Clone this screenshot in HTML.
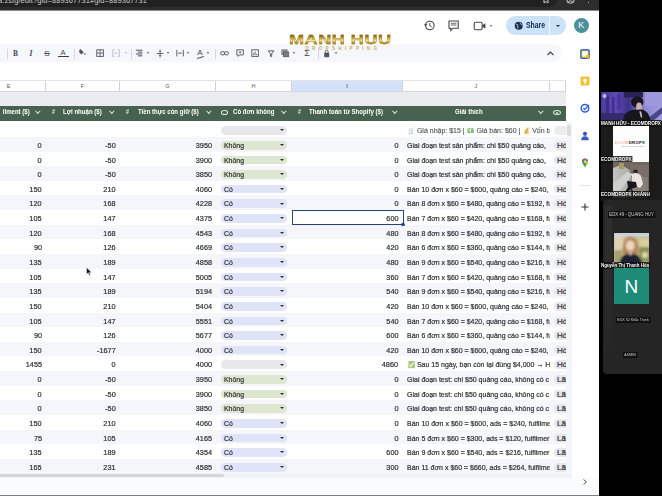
<!DOCTYPE html>
<html lang="vi">
<head>
<meta charset="utf-8">
<title>Sheet</title>
<style>
html,body{margin:0;padding:0;}
body{width:662px;height:496px;overflow:hidden;background:#fff;font-family:"Liberation Sans",sans-serif;}
#root{position:relative;width:662px;height:496px;overflow:hidden;background:#fff;}
#root *{box-sizing:border-box;}
.abs{position:absolute;}
/* browser bar */
#chrome{left:0;top:0;width:662px;height:10.8px;background:#2d2d2d;border-bottom:.9px solid #8a8a8a;}
#url{left:-2px;top:-4.2px;font-size:7.45px;color:#c9c9c9;white-space:nowrap;letter-spacing:.1px;}
/* right panel */
#panel{left:599px;top:0;width:63px;height:496px;background:#000;overflow:hidden;}
/* sheet */
#sheet{left:0;top:10px;width:599px;height:486px;background:#fff;overflow:hidden;}
#toolbar{left:-20px;top:33.5px;width:582px;height:18.5px;border-radius:9.5px;background:#f5f7fb;}
#colhdr{left:0;top:70px;width:566px;height:12px;background:#fff;border-top:1px solid #e1e3e6;border-bottom:1px solid #d5d7da;}
#colhdr span{position:absolute;top:0;height:10px;font-size:5.5px;color:#555;text-align:center;line-height:10px;border-right:1px solid #d0d2d5;}
#frozen{left:0;top:82px;width:566px;height:14.3px;background:#ebecef;}
#ghead{left:0;top:96.3px;width:566px;height:14.8px;background:#47634f;}
#ghead span{position:absolute;top:-.8px;line-height:12.6px;font-size:7.6px;transform:scaleX(.8);transform-origin:0 50%;font-weight:bold;color:#fff;white-space:nowrap;}
#ghead .hs{font-weight:bold;font-size:6.4px;font-style:italic;color:#e4ebe6;}
#ghead .ar{width:3.6px;height:3.6px;border-right:1px solid #dfe7e1;border-bottom:1px solid #dfe7e1;transform:rotate(45deg);transform-origin:50% 50%;top:3.2px;}
/* rows */
#rows{left:0;top:0;width:566px;height:496px;}
.row{position:absolute;left:0;width:566px;height:14.7px;background:#fff;overflow:hidden;}
.row.odd{background:#f5f6fa;}
.row span{position:absolute;top:0;line-height:17.4px;font-size:8.1px;color:#2e3033;-webkit-text-stroke:.22px #2e3033;white-space:nowrap;}
.row .n{text-align:right;transform:scaleX(.9);transform-origin:100% 50%;}
.row .j{left:406.5px;width:165.3px;overflow:hidden;transform:scaleX(.865);transform-origin:0 50%;}
.row .chip{left:221px;top:4px;width:66px;height:8.6px;border-radius:4.3px;}
.row .chip b{position:absolute;left:3.2px;top:0;font-weight:normal;line-height:9.2px;font-size:8px;transform:scaleX(.865);transform-origin:0 50%;color:#33363a;}
.row .chip i{position:absolute;right:3.4px;top:3.1px;width:0;height:0;border-left:2.3px solid transparent;border-right:2.3px solid transparent;border-top:2.7px solid #2b2b2b;}
.cg{background:#e7e8ec;}
.ck{background:#dde6d0;}
.cc{background:#e0e4f9;}
.row .kchip{left:554px;top:4px;width:20px;height:8.6px;border-radius:4.3px;background:#e6e7ec;line-height:9.2px;font-size:8px;padding-left:3px;color:#33363a;}
.row .kchip.kg{background:#ececef;}

/* top area */
.ic{position:absolute;}
#logo{z-index:5;left:289px;top:23px;width:102px;height:15px;overflow:visible;}
#logo b{position:absolute;left:0;top:0;display:block;white-space:nowrap;font-size:12.3px;line-height:15px;font-weight:bold;transform-origin:0 50%;transform:scaleX(1.47);letter-spacing:.35px;background:linear-gradient(180deg,#7d5d13 18%,#c9a545 34%,#f3e6a6 50%,#b38a28 66%,#8a6716 84%);-webkit-background-clip:text;background-clip:text;color:transparent;-webkit-text-stroke:.45px rgba(176,140,44,.85);}
#logo2{z-index:5;left:305.5px;top:35.6px;font-size:4.6px;line-height:6px;letter-spacing:3.3px;color:#c4b070;white-space:nowrap;font-weight:bold;}
#share{left:505.5px;top:6.4px;width:60px;height:18.8px;border-radius:9.4px;background:#cbe2f8;}
#share b{position:absolute;left:20.5px;top:0;line-height:18.8px;font-size:9px;color:#0b2a4a;transform:scaleX(.76);transform-origin:0 50%;}
#share u{position:absolute;left:43.5px;top:0;width:1px;height:18.8px;background:#f2f7fc;}
#share i{position:absolute;left:50px;top:8.4px;border-left:2.2px solid transparent;border-right:2.2px solid transparent;border-top:2.6px solid #17304d;}
#avatar{left:573.8px;top:8.1px;width:15px;height:15px;border-radius:50%;background:#4d8f9b;color:#fff;font-size:9px;line-height:15px;text-align:center;}
.tsep{position:absolute;top:38.5px;width:1px;height:10px;background:#d4d8de;}
.tarr{position:absolute;top:42.2px;border-left:1.7px solid transparent;border-right:1.7px solid transparent;border-top:2px solid #505357;}
.tt{position:absolute;top:36.5px;font-size:7.4px;line-height:13px;color:#45484c;text-align:center;width:12px;}
/* side icons */
.sico{position:absolute;left:580px;width:10px;height:10px;}
/* panel */
.tile{position:absolute;overflow:hidden;}
.lbl{position:absolute;white-space:nowrap;background:rgba(16,16,16,.82);padding-right:1px;color:#fff;font-weight:bold;font-size:5.5px;line-height:7px;text-shadow:0 0 1px #000;transform:scaleX(.85);transform-origin:0 50%;}
.lbl2{position:absolute;white-space:nowrap;color:#cfcfcf;font-size:5px;line-height:6.5px;background:#111;padding:0 1.5px;transform:scaleX(.86);transform-origin:0 50%;}
.row .j em{font-style:normal;font-size:6.6px;opacity:.75;-webkit-text-stroke:0;padding:0 .6px;}
.row .j.r0{color:#4a4d52;-webkit-text-stroke:.12px #4a4d52;}
</style>
</head>
<body>
<div id="root">

<!-- ============ SHEET ============ -->
<div id="sheet" class="abs">

  <!-- title row icons -->
  <svg class="ic" style="left:423px;top:9px" width="13" height="13" viewBox="0 0 13 13"><circle cx="6.8" cy="6.5" r="4.3" fill="none" stroke="#444" stroke-width="1.1"/><path d="M6.8 4v2.7l1.8 1.1" fill="none" stroke="#444" stroke-width="1"/><path d="M.8 5.2l1.9 2 1.8-2z" fill="#444"/></svg>
  <svg class="ic" style="left:447px;top:9px" width="13" height="13" viewBox="0 0 13 13"><path d="M2 2h9.2v7.2H6l-2.2 2.2V9.200H2z" fill="none" stroke="#444" stroke-width="1.1"/><path d="M3.8 4.300h5.600M3.800 6h5.600" stroke="#444" stroke-width=".8"/></svg>
  <svg class="ic" style="left:473px;top:10px" width="14" height="12" viewBox="0 0 14 12"><rect x="1.200" y="2.200" width="8" height="7.600" rx="1.500" fill="none" stroke="#444" stroke-width="1.100"/><path d="M9.400 5.200l3-2v5.600l-3-2z" fill="#444"/></svg>
  <i class="tarr" style="left:490px;top:15px"></i>
  <div id="share" class="abs"><svg class="ic" style="left:8px;top:4.800px" width="9.500" height="9.500" viewBox="0 0 10 10"><circle cx="5" cy="5" r="4.200" fill="#17304d"/><path d="M2 3.500c1.500-.5 2.500.5 2 1.500s.5 1.500 0 3M6 1.500c0 1 1.500 1 1.500 2s1 .500 1.500 1" fill="none" stroke="#cbe2f8" stroke-width=".9"/></svg><b>Share</b><u></u><i></i></div>
  <div id="avatar" class="abs">K</div>
  <div id="logo" class="abs"><b>MANH HUU</b></div>
  <div id="logo2" class="abs">DROPSHIPPING</div>
  <!-- toolbar -->
  <div id="toolbar" class="abs"></div>
  <i class="tsep" style="left:6.500px"></i>
  <span class="tt" style="left:9.500px;font-family:'Liberation Serif',serif;font-weight:bold">B</span>
  <span class="tt" style="left:25px;font-family:'Liberation Serif',serif;font-style:italic;font-weight:bold">I</span>
  <span class="tt" style="left:41px;text-decoration:line-through;font-size:8px">S</span>
  <span class="tt" style="left:57px;font-size:7.500px;top:35.500px">A</span><i class="abs" style="left:57.500px;top:45.500px;width:11px;height:1.800px;background:#3a3c40"></i>
  <i class="tsep" style="left:73.500px"></i>
  <svg class="ic" style="left:77.90px;top:37.90px" width="8.20" height="8.20" viewBox="0 0 10 10"><path d="M2.500 1l4.500 4.200-2.800 2.600-3-3z" fill="#505357"/><circle cx="8.300" cy="7.300" r="1" fill="#505357"/></svg>
  <svg class="ic" style="left:95.90px;top:39.40px" width="8.20" height="8.20" viewBox="0 0 10 10"><rect x="1" y="1" width="8" height="8" fill="none" stroke="#505357" stroke-width="1.100"/><path d="M5 1v8M1 5h8" stroke="#505357" stroke-width="1"/></svg>
  <svg class="ic" style="left:111.90px;top:39.40px" width="8.20" height="8.20" viewBox="0 0 10 10"><path d="M3 1H1v8h2M7 1h2v8H7" fill="none" stroke="#b9bcc1" stroke-width="1.100"/><path d="M3 5h4" stroke="#b9bcc1" stroke-width="1"/></svg>
  <i class="tarr" style="left:124.500px;border-top-color:#b9bcc1"></i>
  <i class="tsep" style="left:131px"></i>
  <svg class="ic" style="left:135.40px;top:39.40px" width="8.20" height="8.20" viewBox="0 0 10 10"><path d="M1 1.500h8M3.500 3.800h5.500M1 6.100h8M3.500 8.400h5.500" stroke="#505357" stroke-width="1.200"/></svg>
  <i class="tarr" style="left:146.600px"></i>
  <svg class="ic" style="left:155.90px;top:38.99px" width="8.20" height="9.02" viewBox="0 0 10 11"><path d="M1 5.500h8" stroke="#505357" stroke-width="1.100"/><path d="M5 .5v3.500M5 10.500v-3.500" stroke="#505357" stroke-width="1"/><path d="M3.300 2.800l1.700 1.700 1.700-1.700zM3.300 8.200l1.700-1.700 1.700 1.700z" fill="#505357"/></svg>
  <i class="tarr" style="left:166.700px"></i>
  <svg class="ic" style="left:175.90px;top:39.40px" width="8.20" height="8.20" viewBox="0 0 10 10"><path d="M1 1v8M9 1v8M2.500 5h5" stroke="#505357" stroke-width="1.100" fill="none"/></svg>
  <i class="tarr" style="left:186.800px"></i>
  <span class="tt" style="left:194px;font-size:8px;top:36px">A</span><i class="abs" style="left:197px;top:46.500px;width:7px;height:1px;background:#505357;transform:rotate(-18deg)"></i>
  <i class="tarr" style="left:206.800px"></i>
  <i class="tsep" style="left:214.500px"></i>
  <svg class="ic" style="left:219.99px;top:40.22px" width="9.02" height="6.56" viewBox="0 0 11 8"><rect x=".7" y="2" width="5" height="4" rx="2" fill="none" stroke="#505357" stroke-width="1.100"/><rect x="5.300" y="2" width="5" height="4" rx="2" fill="none" stroke="#505357" stroke-width="1.100"/></svg>
  <svg class="ic" style="left:235.90px;top:39.40px" width="8.20" height="8.20" viewBox="0 0 10 10"><path d="M1 1h8v6.200H4.200L2.500 9V7.200H1z" fill="none" stroke="#505357" stroke-width="1.100"/><path d="M5 2.500v3M3.500 4h3" stroke="#505357" stroke-width=".9"/></svg>
  <svg class="ic" style="left:251.40px;top:39.40px" width="8.20" height="8.20" viewBox="0 0 10 10"><rect x="1" y="1" width="8" height="8" fill="none" stroke="#505357" stroke-width="1.100"/><path d="M3.200 7.500v-2.500M5 7.500v-4.500M6.800 7.500v-1.500" stroke="#505357" stroke-width="1"/></svg>
  <svg class="ic" style="left:267.40px;top:39.81px" width="8.20" height="7.38" viewBox="0 0 10 9"><path d="M1.500 1h7L5.700 4.500v3.500H4.300V4.500z" fill="none" stroke="#505357" stroke-width="1.100"/></svg>
  <svg class="ic" style="left:281.40px;top:39.40px" width="8.20" height="8.20" viewBox="0 0 10 10"><rect x="1" y="1" width="6.500" height="6" fill="#9a9da2" stroke="#666" stroke-width=".8"/><rect x="3" y="3.500" width="6.500" height="6" fill="#777a80" stroke="#555" stroke-width=".8"/></svg>
  <i class="tarr" style="left:292.800px"></i>
  <span class="tt" style="left:301px;font-size:9px;top:36.500px">&Sigma;</span>
  <i class="tsep" style="left:317.500px"></i>
  <svg class="ic" style="left:322.81px;top:38.99px" width="7.38" height="9.02" viewBox="0 0 9 11"><rect x="1.500" y="4.200" width="6" height="5.800" rx=".8" fill="#505357"/><path d="M2.800 4.200V3a1.700 1.700 0 013.400 0v1.200" fill="none" stroke="#505357" stroke-width="1"/></svg>
  <i class="tarr" style="left:335.300px"></i>
  <svg class="ic" style="left:546px;top:40px" width="9" height="7" viewBox="0 0 9 7"><path d="M1.500 5L4.500 2l3 3" fill="none" stroke="#444" stroke-width="1.100"/></svg>
  <div id="colhdr" class="abs">
    <span style="left:0;width:46px;padding-right:28px">E</span>
    <span style="left:46px;width:74px">F</span>
    <span style="left:120px;width:96px">G</span>
    <span style="left:216px;width:76px">H</span>
    <span style="left:292px;width:111px;background:#d5e0fb;color:#223">I</span>
    <span style="left:403px;width:146.5px">J</span>
    <span style="left:549.5px;width:16.5px"></span>
  </div>
  <div id="frozen" class="abs"></div>
  <div id="ghead" class="abs">
    <span style="right:536.7px;transform-origin:100% 50%">ilment ($)</span><span class="ar" style="left:35.900px"></span>
    <span class="hs" style="left:51.500px">#</span><span style="left:63.300px">Lợi nhuận ($)</span><span class="ar" style="left:109.900px"></span>
    <span class="hs" style="left:126px">#</span><span style="left:137.700px">Tiền thực còn giữ ($)</span><span class="ar" style="left:207.200px"></span>
    <span class="abs" style="transform:none;left:220.500px;top:4.200px;width:7px;height:4.600px;border:.8px solid #dfe7e1;border-radius:50%"></span>
    <span style="left:233px">Có đơn không</span><span class="ar" style="left:282.200px"></span>
    <span class="hs" style="left:298.300px">#</span><span style="left:309.300px">Thanh toán từ Shopify ($)</span><span class="ar" style="left:392.900px"></span>
    <span style="left:455.300px">Giải thích</span><span class="ar" style="left:539.200px"></span>
    <span class="abs" style="transform:none;left:553px;top:3.800px;width:8px;height:5.200px;border:.9px solid #dfe7e1;border-radius:50%"></span><span class="abs" style="transform:none;left:556px;top:5.400px;width:2px;height:2px;border-radius:50%;background:#dfe7e1"></span>
  </div>
</div>

<div id="rows" class="abs">
<div class="row" style="top:122.30px"><span class="chip cg"><i></i></span><span class="j r0"><em>🛒</em> Giá nhập: $15 | <em>💵</em> Giá bán: $60 | <em>💰</em> Vốn b</span><span class="kchip kg"></span></div>
<div class="row odd" style="top:136.94px"><span class="n" style="right:524px">0</span><span class="n" style="right:450px">-50</span><span class="n" style="right:353.5px">3950</span><span class="chip ck"><b>Không</b><i></i></span><span class="n" style="right:167.5px">0</span><span class="j">Giai đoạn test sản phẩm: chi $50 quảng cáo,</span><span class="kchip">Hò</span></div>
<div class="row" style="top:151.57px"><span class="n" style="right:524px">0</span><span class="n" style="right:450px">-50</span><span class="n" style="right:353.5px">3900</span><span class="chip ck"><b>Không</b><i></i></span><span class="n" style="right:167.5px">0</span><span class="j">Giai đoạn test sản phẩm: chi $50 quảng cáo,</span><span class="kchip">Hò</span></div>
<div class="row odd" style="top:166.20px"><span class="n" style="right:524px">0</span><span class="n" style="right:450px">-50</span><span class="n" style="right:353.5px">3850</span><span class="chip ck"><b>Không</b><i></i></span><span class="n" style="right:167.5px">0</span><span class="j">Giai đoạn test sản phẩm: chi $50 quảng cáo,</span><span class="kchip">Hò</span></div>
<div class="row" style="top:180.84px"><span class="n" style="right:524px">150</span><span class="n" style="right:450px">210</span><span class="n" style="right:353.5px">4060</span><span class="chip cc"><b>Có</b><i></i></span><span class="n" style="right:167.5px">0</span><span class="j">Bán 10 đơn x $60 = $600, quảng cáo = $240,</span><span class="kchip">Hò</span></div>
<div class="row odd" style="top:195.47px"><span class="n" style="right:524px">120</span><span class="n" style="right:450px">168</span><span class="n" style="right:353.5px">4228</span><span class="chip cc"><b>Có</b><i></i></span><span class="n" style="right:167.5px">0</span><span class="j">Bán 8 đơn x $60 = $480, quảng cáo = $192, fu</span><span class="kchip">Hò</span></div>
<div class="row" style="top:210.11px"><span class="n" style="right:524px">105</span><span class="n" style="right:450px">147</span><span class="n" style="right:353.5px">4375</span><span class="chip cc"><b>Có</b><i></i></span><span class="n" style="right:167.5px">600</span><span class="j">Bán 7 đơn x $60 = $420, quảng cáo = $168, fu</span><span class="kchip">Hò</span></div>
<div class="row odd" style="top:224.75px"><span class="n" style="right:524px">120</span><span class="n" style="right:450px">168</span><span class="n" style="right:353.5px">4543</span><span class="chip cc"><b>Có</b><i></i></span><span class="n" style="right:167.5px">480</span><span class="j">Bán 8 đơn x $60 = $480, quảng cáo = $192, fu</span><span class="kchip">Hò</span></div>
<div class="row" style="top:239.38px"><span class="n" style="right:524px">90</span><span class="n" style="right:450px">126</span><span class="n" style="right:353.5px">4669</span><span class="chip cc"><b>Có</b><i></i></span><span class="n" style="right:167.5px">420</span><span class="j">Bán 6 đơn x $60 = $360, quảng cáo = $144, fu</span><span class="kchip">Hò</span></div>
<div class="row odd" style="top:254.01px"><span class="n" style="right:524px">135</span><span class="n" style="right:450px">189</span><span class="n" style="right:353.5px">4858</span><span class="chip cc"><b>Có</b><i></i></span><span class="n" style="right:167.5px">480</span><span class="j">Bán 9 đơn x $60 = $540, quảng cáo = $216, fu</span><span class="kchip">Hò</span></div>
<div class="row" style="top:268.65px"><span class="n" style="right:524px">105</span><span class="n" style="right:450px">147</span><span class="n" style="right:353.5px">5005</span><span class="chip cc"><b>Có</b><i></i></span><span class="n" style="right:167.5px">360</span><span class="j">Bán 7 đơn x $60 = $420, quảng cáo = $168, fu</span><span class="kchip">Hò</span></div>
<div class="row odd" style="top:283.28px"><span class="n" style="right:524px">135</span><span class="n" style="right:450px">189</span><span class="n" style="right:353.5px">5194</span><span class="chip cc"><b>Có</b><i></i></span><span class="n" style="right:167.5px">540</span><span class="j">Bán 9 đơn x $60 = $540, quảng cáo = $216, fu</span><span class="kchip">Hò</span></div>
<div class="row" style="top:297.92px"><span class="n" style="right:524px">150</span><span class="n" style="right:450px">210</span><span class="n" style="right:353.5px">5404</span><span class="chip cc"><b>Có</b><i></i></span><span class="n" style="right:167.5px">420</span><span class="j">Bán 10 đơn x $60 = $600, quảng cáo = $240,</span><span class="kchip">Hò</span></div>
<div class="row odd" style="top:312.56px"><span class="n" style="right:524px">105</span><span class="n" style="right:450px">147</span><span class="n" style="right:353.5px">5551</span><span class="chip cc"><b>Có</b><i></i></span><span class="n" style="right:167.5px">540</span><span class="j">Bán 7 đơn x $60 = $420, quảng cáo = $168, fu</span><span class="kchip">Hò</span></div>
<div class="row" style="top:327.19px"><span class="n" style="right:524px">90</span><span class="n" style="right:450px">126</span><span class="n" style="right:353.5px">5677</span><span class="chip cc"><b>Có</b><i></i></span><span class="n" style="right:167.5px">600</span><span class="j">Bán 6 đơn x $60 = $360, quảng cáo = $144, fu</span><span class="kchip">Hò</span></div>
<div class="row odd" style="top:341.82px"><span class="n" style="right:524px">150</span><span class="n" style="right:450px">-1677</span><span class="n" style="right:353.5px">4000</span><span class="chip cc"><b>Có</b><i></i></span><span class="n" style="right:167.5px">420</span><span class="j">Bán 10 đơn x $60 = $600, quảng cáo = $240,</span><span class="kchip">Hò</span></div>
<div class="row" style="top:356.46px"><span class="n" style="right:524px">1455</span><span class="n" style="right:450px">0</span><span class="n" style="right:353.5px">4000</span><span class="chip cg"><i></i></span><span class="n" style="right:167.5px">4860</span><span class="j"><em>✅</em> Sau 15 ngày, bạn còn lại đúng $4,000 → H</span><span class="kchip">Hò</span></div>
<div class="row odd" style="top:371.09px"><span class="n" style="right:524px">0</span><span class="n" style="right:450px">-50</span><span class="n" style="right:353.5px">3950</span><span class="chip ck"><b>Không</b><i></i></span><span class="n" style="right:167.5px">0</span><span class="j">Giai đoạn test: chi $50 quảng cáo, không có c</span><span class="kchip">Lã</span></div>
<div class="row" style="top:385.73px"><span class="n" style="right:524px">0</span><span class="n" style="right:450px">-50</span><span class="n" style="right:353.5px">3900</span><span class="chip ck"><b>Không</b><i></i></span><span class="n" style="right:167.5px">0</span><span class="j">Giai đoạn test: chi $50 quảng cáo, không có c</span><span class="kchip">Lã</span></div>
<div class="row odd" style="top:400.37px"><span class="n" style="right:524px">0</span><span class="n" style="right:450px">-50</span><span class="n" style="right:353.5px">3850</span><span class="chip ck"><b>Không</b><i></i></span><span class="n" style="right:167.5px">0</span><span class="j">Giai đoạn test: chi $50 quảng cáo, không có c</span><span class="kchip">Lã</span></div>
<div class="row" style="top:415.00px"><span class="n" style="right:524px">150</span><span class="n" style="right:450px">210</span><span class="n" style="right:353.5px">4060</span><span class="chip cc"><b>Có</b><i></i></span><span class="n" style="right:167.5px">0</span><span class="j">Bán 10 đơn x $60 = $600, ads = $240, fulfilme</span><span class="kchip">Lã</span></div>
<div class="row odd" style="top:429.63px"><span class="n" style="right:524px">75</span><span class="n" style="right:450px">105</span><span class="n" style="right:353.5px">4165</span><span class="chip cc"><b>Có</b><i></i></span><span class="n" style="right:167.5px">0</span><span class="j">Bán 5 đơn x $60 = $300, ads = $120, fulfilmer</span><span class="kchip">Lã</span></div>
<div class="row" style="top:444.27px"><span class="n" style="right:524px">135</span><span class="n" style="right:450px">189</span><span class="n" style="right:353.5px">4354</span><span class="chip cc"><b>Có</b><i></i></span><span class="n" style="right:167.5px">600</span><span class="j">Bán 9 đơn x $60 = $540, ads = $216, fulfilmer</span><span class="kchip">Lã</span></div>
<div class="row odd" style="top:458.91px"><span class="n" style="right:524px">165</span><span class="n" style="right:450px">231</span><span class="n" style="right:353.5px">4585</span><span class="chip cc"><b>Có</b><i></i></span><span class="n" style="right:167.5px">300</span><span class="j">Bán 11 đơn x $60 = $660, ads = $264, fulfilme</span><span class="kchip">Lã</span></div>
</div>



<!-- selection, scrollbars, bottom -->
<div class="abs" style="left:291.500px;top:209.600px;width:112px;height:15.600px;border:1px solid #2b3f7e"></div>
<div class="abs" style="left:401.300px;top:222.800px;width:3.600px;height:3.600px;border-radius:50%;background:#2b3f9e"></div>
<div class="abs" style="left:566px;top:10px;width:6px;height:112px;background:#fff"></div><div class="abs" style="left:566px;top:122px;width:6px;height:356px;background:#f4f5f6"></div>
<div class="abs" style="left:567.300px;top:125px;width:3.600px;height:11px;border-radius:2px;background:#dadce0"></div>
<div class="abs" style="left:0;top:474.300px;width:572px;height:3.700px;background:#f1f2f4"></div>
<div class="abs" style="left:-4px;top:474.300px;width:228px;height:3px;border-radius:2px;background:#d3d5d8"></div>
<div class="abs" style="left:0;top:478px;width:599px;height:16.500px;background:#fafbfc"></div>
<div class="abs" style="left:0;top:494.600px;width:599px;height:1.400px;background:#7d7d7d"></div>
<svg class="ic" style="left:581px;top:478px" width="8" height="8" viewBox="0 0 8 8"><path d="M2.800 1.500L5.300 4 2.800 6.500" fill="none" stroke="#444" stroke-width="1"/></svg>

<svg class="ic" style="left:86px;top:266.500px" width="6" height="9" viewBox="0 0 6 9"><path d="M.6.500v6.800l1.600-1.500 1.100 2.600 1.100-.5-1.100-2.500h2.200z" fill="#111" stroke="#fff" stroke-width=".4"/></svg>
<!-- ============ SIDE ICONS ============ -->
<svg class="sico" style="top:48.500px" viewBox="0 0 10 10"><rect x=".8" y=".8" width="8.400" height="8.400" rx="1" fill="#fbbc04" stroke="#3b6fd8" stroke-width="1.400"/><rect x="2.300" y="2.300" width="5.400" height="5.400" fill="#fff"/><rect x="6" y="6" width="3.200" height="3.200" fill="#fbbc04"/></svg>
<svg class="sico" style="top:76px" viewBox="0 0 10 10"><rect x=".5" y=".5" width="9" height="9" rx="1.200" fill="#f2c230"/><circle cx="5" cy="4.300" r="1.800" fill="#fff"/><rect x="4.100" y="6" width="1.800" height="1.500" fill="#fff"/></svg>
<svg class="sico" style="top:103px" viewBox="0 0 10 10"><circle cx="5" cy="5.200" r="3.800" fill="none" stroke="#2f62d9" stroke-width="1.500"/><path d="M3.300 5.200l1.400 1.400L8.800 2" fill="none" stroke="#2f62d9" stroke-width="1.400"/></svg>
<svg class="sico" style="top:131px" viewBox="0 0 10 10"><circle cx="5" cy="2.800" r="2.100" fill="#3457c9"/><path d="M1.200 9.300c0-3 1.600-4 3.800-4s3.800 1 3.800 4z" fill="#3457c9"/></svg>
<svg class="sico" style="top:157.500px" viewBox="0 0 10 10"><path d="M5 9.800C4.500 7.500 2 6 2 3.600a3 3 0 016 0C8 6 5.500 7.500 5 9.800z" fill="#34a853"/><path d="M5 .6a3 3 0 013 3L5 3.600z" fill="#4285f4"/><path d="M2 3.600a3 3 0 013-3v3z" fill="#ea4335"/><path d="M5 3.600l3 0c0 1.200-.8 2.300-1.600 3.300z" fill="#fbbc04"/><circle cx="5" cy="3.600" r="1" fill="#fff"/></svg>
<i class="abs" style="left:580px;top:185px;width:10px;height:1px;background:#e3e5e8"></i>
<svg class="sico" style="top:201.500px" viewBox="0 0 10 10"><path d="M5 1.500v7M1.500 5h7" stroke="#333" stroke-width="1.100"/></svg>

<!-- ============ CHROME BAR ============ -->
<div id="chrome" class="abs"><div class="abs" style="left:-10px;top:-8px;width:567px;height:15px;border-radius:8px;background:#212121"></div><div id="url" class="abs">a.zstg/edit?gid=889367731#gid=889367731</div>
<svg class="ic" style="left:542px;top:-4px" width="8" height="8" viewBox="0 0 8 8"><path d="M2 0h4v7L4 5.500 2 7z" fill="none" stroke="#d0d0d0" stroke-width="1"/></svg>
<svg class="ic" style="left:566px;top:-5px" width="9" height="9" viewBox="0 0 9 9"><circle cx="4.500" cy="4.500" r="3.800" fill="none" stroke="#cfcfcf" stroke-width="1"/><path d="M2 7.500c.5-2 4.500-2 5 0" fill="none" stroke="#cfcfcf" stroke-width="1"/></svg>
<i class="abs" style="left:587.500px;top:1.500px;width:1.600px;height:1.600px;border-radius:50%;background:#ddd"></i>
</div>

<!-- ============ RIGHT PANEL ============ -->
<div id="panel" class="abs">
  <div class="abs" style="left:1.500px;top:91.500px;width:61.500px;height:109px;background:#1b1b1b"></div>
  <div class="abs" style="left:4px;top:200px;width:59px;height:173.500px;background:#252525;border-radius:4px 0 0 4px"></div>
  <div class="abs" style="left:6px;top:205px;width:7px;height:150px;background:linear-gradient(180deg,#2e2e2e,#2b2b2b 60%,#252525);border-radius:4px"></div>
  <!-- tile 1 -->
  <svg class="tile" style="left:1.700px;top:91.700px" width="61.300" height="29" viewBox="0 0 61.300 29">
    <defs><filter id="bl1" x="-10%" y="-10%" width="120%" height="120%"><feGaussianBlur stdDeviation=".7"/></filter>
    <linearGradient id="g1" x1="0" x2="1" y1="0" y2="0"><stop offset="0" stop-color="#4b3a9e"/><stop offset=".25" stop-color="#5d48b6"/><stop offset=".45" stop-color="#3f3288"/><stop offset=".72" stop-color="#8f88d2"/><stop offset="1" stop-color="#a29de0"/></linearGradient></defs>
    <rect width="61.300" height="29" fill="url(#g1)"/>
    <g filter="url(#bl1)">
      <rect x="5" y="3" width="3" height="22" fill="#3a2d80"/>
      <rect x="11" y="5" width="2.500" height="20" fill="#3d3087"/>
      <rect x="16" y="2" width="4" height="16" fill="#46389a"/>
      <rect x="0" y="21" width="26" height="8" fill="#35296f"/>
      <path d="M1 4l2.500-2.800L6 4 3.500 6.800z" fill="#bcaef0"/>
      <rect x="23" y="0" width="19" height="5.500" fill="#2a2252"/>
      <rect x="44" y="0" width="18" height="14" fill="#9d98dc"/>
      <path d="M46 27L61.300 15v6L52 29z" fill="#4a4486"/>
      <ellipse cx="36.300" cy="10" rx="6.200" ry="5.600" fill="#16121e"/>
      <ellipse cx="38" cy="14.800" rx="2.900" ry="4.300" fill="#ccb0b2"/>
      <path d="M22 29c.5-7 5-10.500 10-11l8-.5c5 .5 8.500 4 9.500 11.500z" fill="#15131c"/>
      <path d="M38.300 19.500l1.800-.3 1.300 6-1.600.3z" fill="#c8c0d2"/>
    </g>
  </svg>
  <span class="lbl" style="left:1.800px;top:120.200px;letter-spacing:-.05px">MANH HỮU - ECOMDROPX</span>
  <!-- tile 2 -->
  <div class="tile" style="left:14.300px;top:126.400px;width:35.800px;height:35.400px;background:#fdfdfd">
    <span class="abs" style="left:1.500px;top:13.500px;font-size:4.300px;line-height:5px;font-weight:bold;color:#222;letter-spacing:.25px;white-space:nowrap"><span style="color:#e3a08a;font-weight:normal">ECOM</span>DROPX</span>
    <span class="abs" style="left:8.500px;top:18.800px;font-size:2.400px;line-height:3px;color:#777;letter-spacing:.7px;white-space:nowrap">ECOMMERCE</span>
  </div>
  <span class="lbl" style="left:1.800px;top:155.800px;">ECOMDROPX</span>
  <!-- tile 3 -->
  <svg class="tile" style="left:14.300px;top:162px" width="35.800" height="35.600" viewBox="0 0 35.800 35.600">
    <defs><filter id="bl3" x="-10%" y="-10%" width="120%" height="120%"><feGaussianBlur stdDeviation=".7"/></filter>
    <linearGradient id="g3" x1="0" x2="1" y1="0" y2="0"><stop offset="0" stop-color="#c3c3c1"/><stop offset=".4" stop-color="#b3b1ad"/><stop offset=".6" stop-color="#8e847d"/><stop offset="1" stop-color="#857a73"/></linearGradient></defs>
    <rect width="35.800" height="35.600" fill="url(#g3)"/>
    <g filter="url(#bl3)">
      <path d="M0 0h36v5L17 8 8 3 0 6z" fill="#6f675d"/>
      <rect x="6" y="1" width="5" height="6" fill="#a39a6e"/>
      <rect x="17" y="3" width="19" height="12" fill="#7a6e67"/>
      <path d="M0 22L14 10l6 2L6 30 0 30z" fill="#cfcfcd"/>
      <ellipse cx="22.500" cy="9.800" rx="2.400" ry="2.300" fill="#2b2523"/>
      <path d="M19 12c3-2 7-1 9 2l2 8-3 4-8-4z" fill="#e9e4e0"/>
      <path d="M14 19l9 1 1 5-6 2-3 3h-3l3-5z" fill="#19171a"/>
      <path d="M17 26l3 4" stroke="#1c1a1c" stroke-width="1.300"/>
    </g>
  </svg>
  <span class="lbl" style="left:1.800px;top:191.200px;">ECOMDROPX KHÁNH</span>
  <span class="lbl2" style="left:9px;top:211px;">EDX 49 - QUANG HUY</span>
  <!-- tile 4 -->
  <svg class="tile" style="left:14.500px;top:232.700px" width="35.800" height="35.300" viewBox="0 0 35.800 35.300">
    <defs><filter id="bl4" x="-10%" y="-10%" width="120%" height="120%"><feGaussianBlur stdDeviation=".8"/></filter></defs>
    <rect width="35.800" height="35.300" fill="#c9be90"/>
    <g filter="url(#bl4)">
      <rect x="0" y="0" width="35.800" height="3.500" fill="#c9d6ea"/>
      <rect x="0" y="3" width="9" height="14" fill="#ddd0b5"/>
      <rect x="0" y="17" width="8" height="12" fill="#a8a070"/>
      <rect x="26" y="6" width="10" height="10" fill="#d9cf9f"/>
      <rect x="25" y="14" width="11" height="15" fill="#8c9358"/>
      <ellipse cx="31" cy="22" rx="3" ry="3" fill="#e1d6a8"/>
      <path d="M8.500 21C8 10 11 3.500 16.500 3.500S25 9 24 21z" fill="#b3895a"/>
      <ellipse cx="16.300" cy="12.500" rx="4.300" ry="5.300" fill="#f0d3be"/>
      <path d="M5 35.300c0-10 4-15 11.500-15S28 25 29 35.300z" fill="#1c2030"/>
      <path d="M14 19.500l2.500 3 2.500-3z" fill="#ecd0be"/>
    </g>
  </svg>
  <span class="lbl" style="left:1.800px;top:261.500px;font-size:5.200px">Nguyễn Thị Thanh Hòa</span>
  <!-- tile 5 -->
  <div class="tile" style="left:14.500px;top:268px;width:35.800px;height:35.800px;background:#1e8a78;color:#fff;text-align:center;font-size:19px;line-height:37px;">N</div>
  <span class="lbl2" style="left:16.500px;top:316.500px;font-size:4.200px">EDX 52 Khắc Thịnh</span>
  <span class="lbl2" style="left:24px;top:351.500px;font-size:4.200px">ADMIN</span>
</div>

</div>
</body>
</html>
